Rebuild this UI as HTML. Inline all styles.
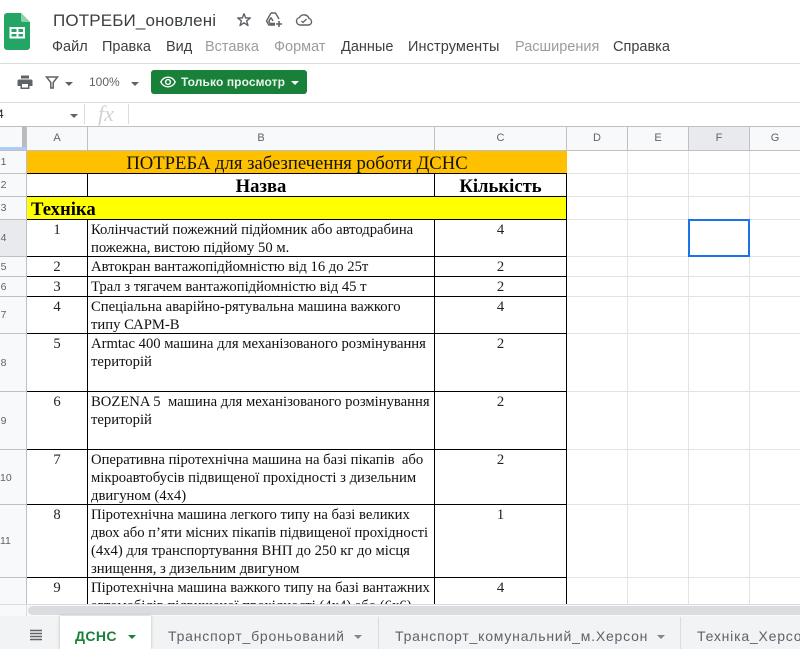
<!DOCTYPE html>
<html><head><meta charset="utf-8">
<style>
html,body{margin:0;padding:0;background:#fff}
#p{position:relative;width:800px;height:649px;overflow:hidden;font-family:"Liberation Sans",sans-serif;background:#fff}
.a{position:absolute;white-space:nowrap}
.m{top:38px;font-size:14.5px;line-height:18px;color:#3c4043}
.d{color:#9a9ca0}
.ln{position:absolute;background:#e2e3e3}
.k{position:absolute;background:#000}
.hd{position:absolute;top:127px;height:23px;line-height:23px;text-align:center;font-size:11px;color:#5f6368;background:#f8f9fa;border-right:1px solid #c0c0c0}
.rh{position:absolute;left:0;width:26px;text-align:center;font-size:10.5px;color:#5f6368;background:#f8f9fa;border-bottom:1px solid #c0c0c0;box-sizing:border-box;padding-right:19px;white-space:nowrap;overflow:visible}
.t{position:absolute;left:91px;margin-top:1px;font:14.67px/18px "Liberation Serif",serif;color:#111;white-space:nowrap}
.n{position:absolute;margin-top:1px;font:14.67px/18px "Liberation Serif",serif;color:#222;text-align:center}
.na{left:27px;width:60px}.nc{left:435px;width:131px}
.tab{position:absolute;top:626px;font-size:14px;letter-spacing:.8px;line-height:20px;color:#5f6368;white-space:nowrap}
.ar{position:absolute;width:0;height:0;border-left:4px solid transparent;border-right:4px solid transparent;border-top:4px solid #5f6368}
</style></head><body><div id="p">

<!-- logo -->
<svg class="a" style="left:4px;top:13px" width="27" height="37" viewBox="0 0 27 37">
<path d="M3 0H17L26 9V34a3 3 0 0 1-3 3H3a3 3 0 0 1-3-3V3a3 3 0 0 1 3-3z" fill="#23a566"/>
<path d="M17 0L26 9H19a2 2 0 0 1-2-2z" fill="#8ed1b1"/>
<path d="M5.500 14H21V25.500H5.500zM7.500 16V19H12.500V16zM14.500 16V19H19V16zM7.500 21V23.500H12.500V21zM14.500 21V23.500H19V21z" fill="#fff" fill-rule="evenodd"/>
</svg>

<div class="a" style="left:53px;top:10px;font-size:17px;line-height:22px;color:#3c4043;letter-spacing:.15px">ПОТРЕБИ_оновлені</div>
<svg class="a" style="left:236px;top:12px" width="16" height="16" viewBox="0 0 16 16"><path d="M8 1.800L9.700 6H14.300L10.600 8.900L12 13.600L8 10.800L4 13.600L5.400 8.900L1.700 6H6.300z" fill="none" stroke="#5f6368" stroke-width="1.400" stroke-linejoin="round"/></svg>
<svg class="a" style="left:265px;top:11px" width="18" height="18" viewBox="0 0 18 18"><path d="M6 2H10.500L14 8M6 2L1.500 10L3.800 14H10M6 6.500L3.800 10.500L5 12.500H10M6 6.500L8 10" fill="none" stroke="#5f6368" stroke-width="1.400" stroke-linejoin="round"/><path d="M14 10V16M11 13H17" stroke="#5f6368" stroke-width="1.600"/></svg>
<svg class="a" style="left:295px;top:12px" width="18" height="16" viewBox="0 0 18 16"><path d="M5 13H13.500A3.300 3.300 0 0 0 14 6.500A5.200 5.200 0 0 0 4.500 5.500A3.800 3.800 0 0 0 5 13z" fill="none" stroke="#5f6368" stroke-width="1.400"/><path d="M6.500 9L8 10.500L11.500 7" fill="none" stroke="#5f6368" stroke-width="1.300"/></svg>

<div class="a m" style="left:52px">Файл</div>
<div class="a m" style="left:102px">Правка</div>
<div class="a m" style="left:166px">Вид</div>
<div class="a m d" style="left:205px">Вставка</div>
<div class="a m d" style="left:274px">Формат</div>
<div class="a m" style="left:341px">Данные</div>
<div class="a m" style="left:408px;letter-spacing:.1px">Инструменты</div>
<div class="a m d" style="left:515px">Расширения</div>
<div class="a m" style="left:613px">Справка</div>

<div class="ln" style="left:0;top:63px;width:800px;height:1px;background:#dadce0"></div>

<!-- toolbar -->
<svg class="a" style="left:16px;top:73px" width="18" height="18" viewBox="0 0 18 18"><path d="M5 2.500H13V5.500H5zM3 6.500H15A1.500 1.500 0 0 1 16.500 8V13H13.500V16H4.500V13H1.500V8A1.500 1.500 0 0 1 3 6.500zM6 11V14.500H12V11z" fill="#5f6368" fill-rule="evenodd"/></svg>
<svg class="a" style="left:45px;top:75px" width="14" height="15" viewBox="0 0 14 15"><path d="M1.500 2H12.500L8.200 7.500V13H5.800V7.500z" fill="none" stroke="#5f6368" stroke-width="1.500"/></svg>
<div class="ar" style="left:65px;top:82px"></div>
<div class="a" style="left:89px;top:75px;font-size:12px;line-height:15px;color:#5f6368">100%</div>
<div class="ar" style="left:131px;top:82px"></div>
<div class="a" style="left:151px;top:70px;width:156px;height:24px;background:#188038;border-radius:3px"></div>
<svg class="a" style="left:160px;top:74px" width="16" height="16" viewBox="0 0 16 16"><path d="M.800 8C2.300 4.800 5 3.200 8 3.200S13.700 4.800 15.200 8C13.700 11.200 11 12.800 8 12.800S2.300 11.200 .800 8z" fill="none" stroke="#fff" stroke-width="1.400"/><circle cx="8" cy="8" r="2.400" fill="none" stroke="#fff" stroke-width="1.400"/></svg>
<div class="a" style="left:181px;top:74px;font-size:12px;line-height:16px;font-weight:bold;color:#e8f5ec;letter-spacing:.1px">Только просмотр</div>
<div class="ar" style="left:291px;top:81px;border-top-color:#fff"></div>

<div class="ln" style="left:0;top:102px;width:800px;height:1px;background:#dadce0"></div>

<!-- formula bar -->
<div class="a" style="left:-3px;top:107px;font-size:12px;line-height:15px;color:#222">4</div>
<div class="ar" style="left:70px;top:114px"></div>
<div class="ln" style="left:84px;top:104px;width:1px;height:20px;background:#dadce0"></div>
<div class="ln" style="left:128px;top:104px;width:1px;height:20px;background:#dadce0"></div>
<div class="a" style="left:98px;top:103px;font:italic 22px/22px 'Liberation Serif',serif;color:#d0d1d3">fx</div>

<div class="ln" style="left:0;top:126px;width:800px;height:1px;background:#c0c0c0"></div>

<!-- headers -->
<div class="a" style="left:0;top:127px;width:27px;height:23px;background:#f8f9fa"></div>
<div class="a" style="left:22px;top:126px;width:4px;height:21px;background:#b9bbbd"></div>
<div class="a" style="left:0;top:147px;width:26px;height:3px;background:#aecbfa"></div>
<div class="a" style="left:26px;top:127px;width:1px;height:478px;background:#c0c0c0"></div>
<div class="hd" style="left:27px;width:60px">A</div>
<div class="hd" style="left:88px;width:346px">B</div>
<div class="hd" style="left:435px;width:131px">C</div>
<div class="hd" style="left:567px;width:60px">D</div>
<div class="hd" style="left:628px;width:60px">E</div>
<div class="hd" style="left:689px;width:60px;background:#e8eaed">F</div>
<div class="hd" style="left:750px;width:50px">G</div>
<div class="a" style="left:0;top:150px;width:800px;height:1px;background:#c0c0c0"></div>

<!-- row headers -->
<div class="rh" style="top:151px;height:23px;line-height:22px">1</div>
<div class="rh" style="top:174px;height:23px;line-height:22px">2</div>
<div class="rh" style="top:197px;height:23px;line-height:22px">3</div>
<div class="rh" style="top:220px;height:37px;line-height:36px;background:#e8eaed">4</div>
<div class="rh" style="top:257px;height:20px;line-height:20px">5</div>
<div class="rh" style="top:277px;height:20px;line-height:20px">6</div>
<div class="rh" style="top:297px;height:37px;line-height:37px">7</div>
<div class="rh" style="top:334px;height:58px;line-height:58px">8</div>
<div class="rh" style="top:392px;height:58px;line-height:58px">9</div>
<div class="rh" style="top:450px;height:55px;line-height:56px">10</div>
<div class="rh" style="top:505px;height:73px;line-height:73px">11</div>
<div class="rh" style="top:578px;height:27px;border-bottom:0"></div>

<!-- light grid -->
<div class="ln" style="left:627px;top:151px;width:1px;height:453px"></div>
<div class="ln" style="left:688px;top:151px;width:1px;height:453px"></div>
<div class="ln" style="left:749px;top:151px;width:1px;height:453px"></div>
<div class="ln" style="left:567px;top:173px;width:233px;height:1px"></div>
<div class="ln" style="left:567px;top:196px;width:233px;height:1px"></div>
<div class="ln" style="left:567px;top:219px;width:233px;height:1px"></div>
<div class="ln" style="left:567px;top:256px;width:233px;height:1px"></div>
<div class="ln" style="left:567px;top:276px;width:233px;height:1px"></div>
<div class="ln" style="left:567px;top:296px;width:233px;height:1px"></div>
<div class="ln" style="left:567px;top:333px;width:233px;height:1px"></div>
<div class="ln" style="left:567px;top:391px;width:233px;height:1px"></div>
<div class="ln" style="left:567px;top:449px;width:233px;height:1px"></div>
<div class="ln" style="left:567px;top:504px;width:233px;height:1px"></div>
<div class="ln" style="left:567px;top:577px;width:233px;height:1px"></div>

<!-- fills -->
<div class="a" style="left:27px;top:151px;width:540px;height:22px;background:#ffc000"></div>
<div class="a" style="left:27px;top:197px;width:540px;height:22px;background:#ffff00"></div>

<!-- black lines -->
<div class="k" style="left:27px;top:173px;width:540px;height:1px"></div>
<div class="k" style="left:27px;top:196px;width:540px;height:1px"></div>
<div class="k" style="left:27px;top:219px;width:540px;height:1px"></div>
<div class="k" style="left:27px;top:256px;width:540px;height:1px"></div>
<div class="k" style="left:27px;top:276px;width:540px;height:1px"></div>
<div class="k" style="left:27px;top:296px;width:540px;height:1px"></div>
<div class="k" style="left:27px;top:333px;width:540px;height:1px"></div>
<div class="k" style="left:27px;top:391px;width:540px;height:1px"></div>
<div class="k" style="left:27px;top:449px;width:540px;height:1px"></div>
<div class="k" style="left:27px;top:504px;width:540px;height:1px"></div>
<div class="k" style="left:27px;top:577px;width:540px;height:1px"></div>
<div class="k" style="left:87px;top:173px;width:1px;height:24px"></div>
<div class="k" style="left:434px;top:173px;width:1px;height:24px"></div>
<div class="k" style="left:87px;top:219px;width:1px;height:385px"></div>
<div class="k" style="left:434px;top:219px;width:1px;height:385px"></div>
<div class="k" style="left:566px;top:173px;width:1px;height:431px"></div>

<!-- text -->
<div class="a" style="left:27px;top:153px;width:540px;text-align:center;font:18.67px/22px 'Liberation Serif',serif;color:#111">ПОТРЕБА для забезпечення роботи ДСНС</div>
<div class="a" style="left:88px;top:176px;width:346px;text-align:center;font:bold 18.67px/22px 'Liberation Serif',serif;color:#000">Назва</div>
<div class="a" style="left:435px;top:176px;width:131px;text-align:center;font:bold 18.67px/22px 'Liberation Serif',serif;color:#000">Кількість</div>
<div class="a" style="left:31px;top:199px;font:bold 18.67px/22px 'Liberation Serif',serif;color:#000">Техніка</div>

<div class="n na" style="top:220px">1</div><div class="n nc" style="top:220px">4</div>
<div class="t" style="top:220px">Колінчастий пожежний підйомник або автодрабина<br>пожежна, вистою підйому 50 м.</div>
<div class="n na" style="top:257px">2</div><div class="n nc" style="top:257px">2</div>
<div class="t" style="top:257px">Автокран вантажопідйомністю від 16 до 25т</div>
<div class="n na" style="top:277px">3</div><div class="n nc" style="top:277px">2</div>
<div class="t" style="top:277px">Трал з тягачем вантажопідйомністю від 45 т</div>
<div class="n na" style="top:297px">4</div><div class="n nc" style="top:297px">4</div>
<div class="t" style="top:297px">Спеціальна аварійно-рятувальна машина важкого<br>типу САРМ-В</div>
<div class="n na" style="top:334px">5</div><div class="n nc" style="top:334px">2</div>
<div class="t" style="top:334px">Armtac 400 машина для механізованого розмінування<br>територій</div>
<div class="n na" style="top:392px">6</div><div class="n nc" style="top:392px">2</div>
<div class="t" style="top:392px;white-space:pre">BOZENA 5  машина для механізованого розмінування<br>територій</div>
<div class="n na" style="top:450px">7</div><div class="n nc" style="top:450px">2</div>
<div class="t" style="top:450px;white-space:pre">Оперативна піротехнічна машина на базі пікапів  або<br>мікроавтобусів підвищеної прохідності з дизельним<br>двигуном (4х4)</div>
<div class="n na" style="top:505px">8</div><div class="n nc" style="top:505px">1</div>
<div class="t" style="top:505px">Піротехнічна машина легкого типу на базі великих<br>двох або п’яти місних пікапів підвищеної прохідності<br>(4х4) для транспортування ВНП до 250 кг до місця<br>знищення, з дизельним двигуном</div>
<div class="n na" style="top:578px">9</div><div class="n nc" style="top:578px">4</div>
<div class="t" style="top:578px;height:25px;overflow:hidden">Піротехнічна машина важкого типу на базі вантажних<br>автомобілів підвищеної прохідності (4х4) або (6х6)</div>

<!-- selection -->
<div class="a" style="left:688px;top:219px;width:58px;height:34px;border:2px solid #1a73e8"></div>

<!-- scrollbar -->
<div class="a" style="left:0;top:604px;width:800px;height:12px;background:#f8f9fa;border-top:1px solid #dadce0;box-sizing:border-box"></div>
<div class="a" style="left:26px;top:604px;width:1px;height:12px;background:#dadce0"></div>
<div class="a" style="left:28px;top:606px;width:772px;height:9px;background:#dadce0;border-radius:5px 0 0 5px"></div>

<!-- tabs -->
<div class="a" style="left:0;top:616px;width:800px;height:33px;background:#f1f3f4"></div>
<div class="a" style="left:60px;top:616px;width:91px;height:33px;background:#fff;box-shadow:0 0 3px rgba(60,64,67,.3)"></div>
<div class="ln" style="left:378px;top:617px;width:1px;height:32px;background:#dadce0"></div>
<div class="ln" style="left:680px;top:617px;width:1px;height:32px;background:#dadce0"></div>
<svg class="a" style="left:29px;top:629px" width="14" height="13" viewBox="0 0 14 13"><path d="M1 1.500H13M1 4.500H13M1 7.500H13M1 10.500H13" stroke="#5f6368" stroke-width="1.500"/></svg>
<div class="tab" style="left:75px;color:#188038;font-weight:bold;letter-spacing:.4px">ДСНС</div>
<div class="ar" style="left:128px;top:635px;border-top-color:#188038"></div>
<div class="tab" style="left:168px">Транспорт_броньований</div>
<div class="ar" style="left:354px;top:635px;border-top-color:#80868b"></div>
<div class="tab" style="left:395px">Транспорт_комунальний_м.Херсон</div>
<div class="ar" style="left:657px;top:635px;border-top-color:#80868b"></div>
<div class="tab" style="left:697px">Техніка_Херсон</div>

</div></body></html>
